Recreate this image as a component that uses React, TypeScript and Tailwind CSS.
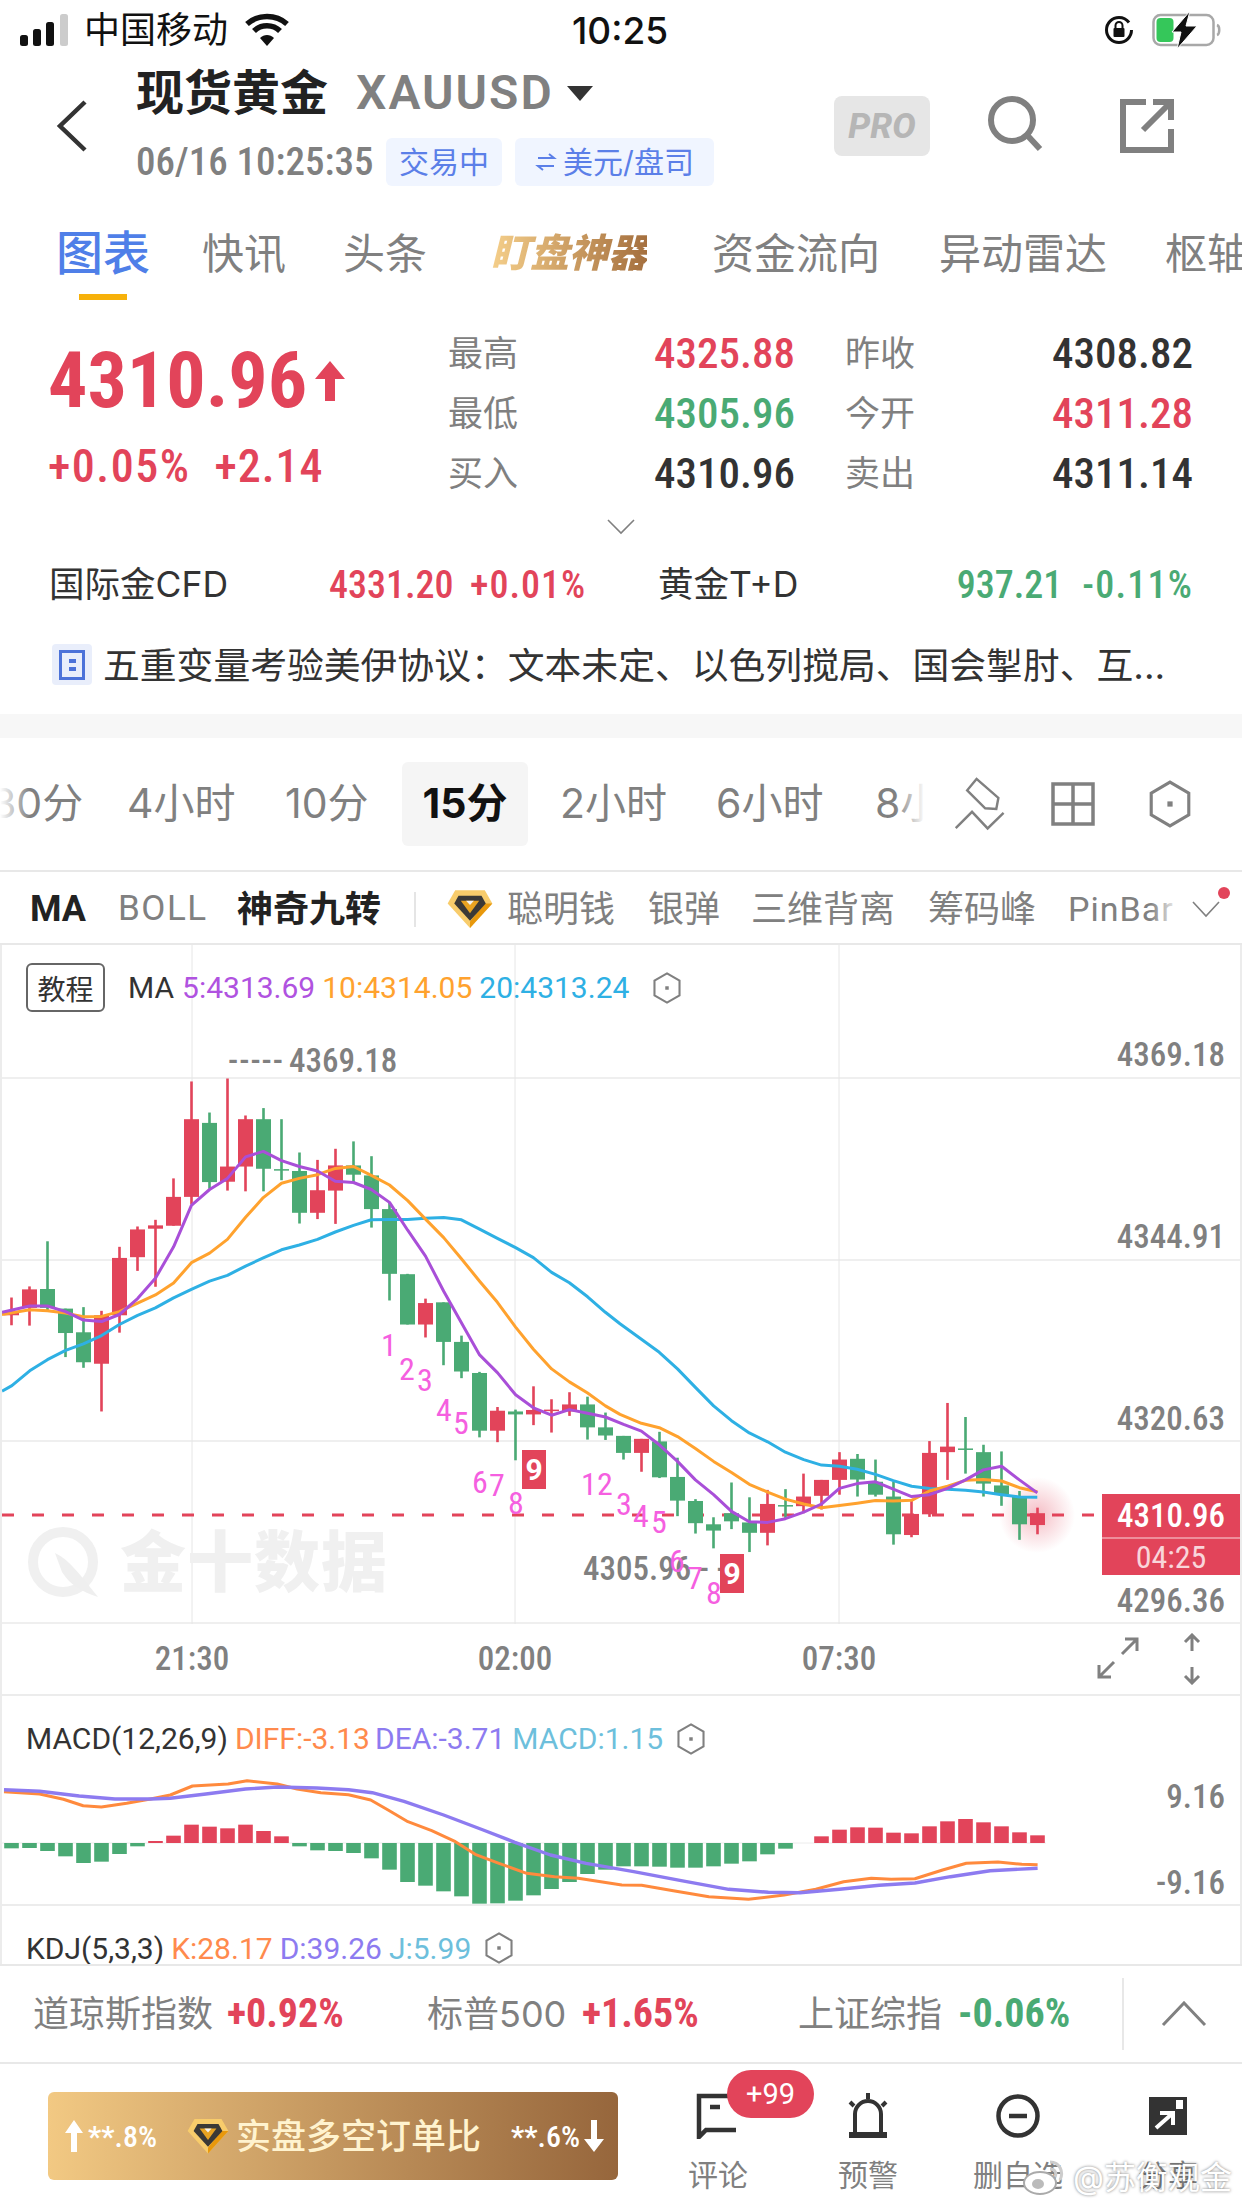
import React from "react";

const RED = "#e2445a";
const GREEN = "#4aaa74";
const num = "font-['Roboto','Noto_Sans_CJK_SC',sans-serif] [font-stretch:75%]";
const axis = "font-['Roboto',sans-serif] [font-stretch:75%] text-[33px] leading-[36px] text-[#808080] font-medium";

// wick top, wick bottom, body top, body bottom, up?  (measured in chart-crop units)
type C = [number, number, number, number, number];
const candles: C[] = [
  [642,717,680,690,1],[612,718,620,670,1],[490,680,619,670,0],[672,803,672,738,0],[668,832,736,817,0],[678,950,690,821,1],
  [505,737,535,690,1],[450,570,458,533,1],[432,613,447,456,1],[320,448,370,448,1],[58,390,160,370,1],[142,348,170,330,0],
  [50,353,288,329,1],[150,355,160,288,1],[130,355,160,294,0],[160,325,295,297,0],[250,442,300,413,0],[270,430,352,413,1],
  [240,443,285,353,1],[220,330,285,310,0],[260,453,312,403,0],[385,650,403,578,0],[578,715,579,715,0],[645,750,657,715,1],
  [655,825,655,762,0],[745,860,762,842,0],[843,1020,846,1002,0],[938,1033,948,1002,1],[945,1082,950,958,0],[882,987,946,958,1],
  [917,1007,945,948,1],[898,962,931,950,1],[910,1026,931,993,0],[953,1027,993,1015,0],[1016,1080,1016,1062,0],[1024,1113,1024,1062,1],
  [1005,1130,1031,1128,0],[1075,1233,1127,1191,0],[1187,1280,1192,1252,0],[1236,1320,1255,1272,0],[1142,1268,1225,1247,0],[1182,1330,1250,1278,0],
  [1162,1312,1200,1278,1],[1160,1240,1203,1206,0],[1118,1225,1180,1206,1],[1135,1215,1135,1178,1],[1060,1175,1080,1135,1],[1065,1180,1078,1134,0],
  [1080,1180,1140,1175,0],[1140,1310,1180,1282,0],[1190,1290,1227,1284,1],[1030,1235,1062,1228,1],[927,1135,1045,1060,1],[965,1118,1050,1054,0],
  [1040,1180,1060,1145,0],[1058,1205,1150,1175,0],[1165,1297,1180,1255,0],[1210,1282,1225,1257,1],
];
const Y = (v: number) => 1060 + v / 2.703;

const mk = (a: number[][], b: number[][]) =>
  a.map(([x, y]) => `${(x / 2.529).toFixed(1)},${Y(y).toFixed(1)}`).concat(b.map(([x, y]) => `${(620 + x / 2.521).toFixed(1)},${Y(y).toFixed(1)}`)).join(" ");

const ma5 = mk(
  [[5,682],[75,665],[120,665],[166,680],[211,703],[257,707],[302,688],[348,645],[393,590],[439,505],[484,393],[530,350],[575,320],[621,262],[666,247],[712,272],[757,288],[803,300],[848,328],[894,331],[939,350],[985,385],[1031,460],[1076,530],[1122,625],[1167,710],[1213,797],[1258,845],[1304,905],[1349,940],[1395,960],[1440,945],[1486,955],[1531,965]],
  [[9,985],[54,1003],[99,1040],[145,1085],[190,1135],[236,1175],[281,1220],[326,1248],[372,1250],[417,1240],[463,1222],[508,1200],[553,1158],[598,1145],[644,1140],[689,1160],[735,1180],[780,1175],[826,1158],[871,1135],[916,1108],[962,1098],[1007,1135],[1052,1170]]
);
const ma10 = mk(
  [[5,688],[75,675],[120,678],[166,684],[211,694],[257,693],[302,680],[348,657],[393,635],[439,603],[484,548],[530,522],[575,485],[621,425],[666,372],[712,333],[757,320],[803,310],[848,293],[894,288],[939,312],[985,338],[1031,380],[1076,430],[1122,480],[1167,537],[1213,598],[1258,655],[1304,722],[1349,782],[1395,835],[1440,870],[1486,900],[1531,935]],
  [[0,958],[54,982],[99,994],[145,1018],[190,1050],[236,1085],[281,1115],[326,1147],[372,1168],[417,1187],[463,1200],[508,1210],[553,1204],[598,1198],[644,1191],[689,1192],[735,1190],[780,1165],[826,1152],[871,1136],[916,1134],[962,1138],[1007,1156],[1052,1167]]
);
const ma20 = mk(
  [[5,895],[30,880],[75,840],[120,810],[166,785],[211,767],[257,745],[302,715],[348,690],[393,670],[439,643],[484,620],[530,598],[575,582],[621,557],[666,535],[712,513],[757,500],[803,485],[848,465],[894,447],[939,432],[985,431],[1031,431],[1076,428],[1122,426],[1167,432],[1213,457],[1258,482],[1304,507],[1349,534],[1395,574],[1440,602],[1486,640],[1531,682]],
  [[0,713],[54,755],[99,790],[145,835],[190,885],[236,935],[281,975],[326,1008],[372,1032],[417,1060],[463,1080],[508,1095],[553,1098],[598,1106],[644,1120],[689,1137],[735,1152],[780,1158],[826,1160],[871,1163],[916,1168],[962,1175],[1007,1181],[1052,1182]]
);

const macdBars = [626,625,634,650,670,666,643,620,604,588,555,561,566,555,574,590,620,632,634,640,656,690,727,738,755,770,792,791,783,767,748,727,703,690,680,680,681,684,684,680,672,665,644,627,610,590,570,563,564,579,581,560,545,538,548,560,578,587];
const line6 = (a: number[][]) => a.map(([x, y]) => `${(x / 1.2625).toFixed(1)},${(1640 + y / 3).toFixed(1)}`).join(" ");
const diff = line6([[5,455],[50,462],[80,478],[105,497],[128,501],[160,490],[190,477],[215,465],[243,438],[288,432],[312,422],[350,432],[375,447],[405,458],[440,464],[468,480],[490,510],[515,545],[545,572],[575,605],[600,643],[630,670],[665,700],[700,710],[730,715],[785,735],[810,736],[850,752],[895,770],[945,778],[990,765],[1030,748],[1065,725],[1100,715],[1125,718],[1155,716],[1190,690],[1220,670],[1260,666],[1290,673],[1310,674]]);
const dea = line6([[5,449],[50,454],[100,468],[145,477],[190,477],[215,475],[260,462],[310,447],[350,441],[400,444],[440,449],[470,458],[510,484],[560,525],[610,570],[650,607],[695,645],[740,670],[800,695],[860,722],[920,748],[970,757],[1010,758],[1060,748],[1110,736],[1155,729],[1200,710],[1250,692],[1310,685]]);

const nines: [string, number, number][] = [
  ["1",389,1345],["2",407,1369],["3",425,1380],["4",444,1410],["5",461,1423],["6",480,1482],["7",497,1485],["8",516,1503],
  ["1",589,1484],["2",605,1484],["3",624,1504],["4",641,1516],["5",659,1522],["6",677,1561],["7",695,1578],["8",714,1593],
];

function Hex({ className = "" }: { className?: string }) {
  return (
    <svg viewBox="0 0 40 46" className={className} fill="none" stroke="#808080" strokeWidth="3">
      <polygon points="20,2 38,12.5 38,33.5 20,44 2,33.5 2,12.5" />
      <rect x="17.5" y="20.5" width="5" height="5" fill="#808080" stroke="none" />
    </svg>
  );
}

function Diamond({ className = "" }: { className?: string }) {
  return (
    <svg viewBox="50 52 140 120" className={className}>
      <polygon points="75,55 165,55 188,95 120,170 52,95" fill="#f8cc6b" />
      <polygon points="188,95 120,170 120,150 165,95" fill="#e8980c" />
      <polygon points="85,72 155,72 168,95 120,148 72,95" fill="#3b3936" />
      <polygon points="92,87 148,87 120,125" fill="#e9a321" />
      <polygon points="108,87 132,87 120,100" fill="#f2f2f2" />
    </svg>
  );
}

function Stat({ label, value, color }: { label: string; value: string; color: string }) {
  return (
    <div className="flex items-center justify-between h-[60px]">
      <span className="text-[35px] text-[#808080]">{label}</span>
      <span className={`${num} text-[43px] font-medium ${color}`}>{value}</span>
    </div>
  );
}

export default function App() {
  return (
    <div className="relative w-[1242px] h-[2208px] overflow-hidden bg-white text-[#333] font-['Inter','Noto_Sans_CJK_SC',sans-serif]">
      {/* status bar */}
      <div className="flex items-center h-[60px] pl-[20px] pr-[20px]">
        <svg width="52" height="34" viewBox="0 0 52 34" className="shrink-0">
          <rect x="0" y="22" width="8" height="11" rx="2.5" fill="#111" />
          <rect x="13" y="16" width="8" height="17" rx="2.5" fill="#111" />
          <rect x="26" y="9" width="8" height="24" rx="2.5" fill="#111" />
          <rect x="40" y="1" width="8" height="32" rx="2.5" fill="#ccc" />
        </svg>
        <span className="ml-[12px] text-[36px] leading-none text-[#111] w-[148px] shrink-0">中国移动</span>
        <svg width="46" height="34" viewBox="0 0 46 34" className="ml-[12px] shrink-0" fill="none" stroke="#111" strokeWidth="5.5">
          <path d="M3 11 C14 1 32 1 43 11" />
          <path d="M10 18 C17 11 29 11 36 18" />
          <path d="M16 25 L23 33 L30 25 C26 21 20 21 16 25Z" fill="#111" stroke="none" />
        </svg>
        <span className="ml-[278px] text-[37px] leading-none text-[#111] font-medium w-[104px] text-center">10:25</span>
        <div className="ml-auto flex items-center">
          <svg width="32" height="32" viewBox="0 0 32 32" fill="none">
            <circle cx="16" cy="16" r="12.5" stroke="#111" strokeWidth="3" strokeDasharray="70 10" />
            <rect x="10.5" y="14" width="11" height="9" rx="1" fill="#111" />
            <path d="M12.5 14 V11.5 A3.5 3.5 0 0 1 19.5 11.5 V14" stroke="#111" strokeWidth="2" />
          </svg>
          <svg width="70" height="38" viewBox="0 0 70 38" className="ml-[17px]" fill="none">
            <rect x="1.5" y="4" width="60" height="30" rx="7" stroke="#a8a8a8" strokeWidth="2.5" />
            <rect x="4.5" y="7" width="17" height="24" rx="4" fill="#35c75a" />
            <path d="M65 14 C68 15 68 23 65 24" stroke="#a8a8a8" strokeWidth="2.5" />
            <path d="M38 0 L20 21 H29 L25 38 L45 15 H34 Z" fill="#111" stroke="#fff" strokeWidth="1" />
          </svg>
        </div>
      </div>

      {/* header */}
      <div className="flex h-[126px]">
        <div className="w-[136px] shrink-0 pl-[55px] pt-[40px]">
          <svg width="34" height="52" viewBox="0 0 34 52" fill="none" stroke="#333" strokeWidth="4.5"><path d="M30 2 L5 26 L30 50" /></svg>
        </div>
        <div className="flex flex-col">
          <div className="flex items-center h-[66px]">
            <span className="text-[48px] leading-none font-bold text-[#222]">现货黄金</span>
            <span className="ml-[28px] text-[48px] leading-none font-semibold text-[#808080] tracking-[2px] font-['Roboto',sans-serif]">XAUUSD</span>
            <span className="ml-[13px] w-0 h-0 border-x-[13px] border-x-transparent border-t-[15px] border-t-[#333]" />
          </div>
          <div className="flex items-center mt-[12px] h-[48px]">
            <span className={`${num} text-[39px] font-medium text-[#808080] w-[250px]`}>06/16 10:25:35</span>
            <span className="h-[48px] w-[116px] flex items-center justify-center rounded-md bg-[#f0f5ff] text-[#5b7fe8] text-[30px]">交易中</span>
            <span className="ml-[13px] h-[48px] w-[199px] flex items-center justify-center rounded-md bg-[#f0f5ff] text-[#5b7fe8] text-[30px]">
              <svg width="22" height="22" viewBox="0 0 22 22" fill="none" stroke="#5b7fe8" strokeWidth="2" className="mr-[6px]">
                <path d="M3 7 H19 L14 3" /><path d="M19 15 H3 L8 19" />
              </svg>
              美元/盘司
            </span>
          </div>
        </div>
        <div className="ml-auto flex items-start pt-[36px] pr-[66px]">
          <div className="w-[96px] h-[60px] flex items-center justify-center rounded-lg bg-[#e6e6e6] text-[#b6b6b6] italic font-extrabold text-[35px] leading-none font-['Roboto',sans-serif]">PRO</div>
          <svg width="56" height="56" viewBox="0 0 56 56" className="ml-[58px]" fill="none" stroke="#808080" strokeWidth="6">
            <circle cx="24" cy="24" r="21" /><path d="M39 39 L52 53" />
          </svg>
          <svg width="56" height="56" viewBox="0 0 56 56" className="ml-[76px] mt-[3px]" fill="none" stroke="#808080" strokeWidth="6">
            <path d="M26 3 H3 V51 H51 V30" /><path d="M23 31 L49 5" /><path d="M33 3 H51 V21" />
          </svg>
        </div>
      </div>

      {/* main tabs */}
      <div className="relative flex items-center h-[114px] pl-[56px] pt-[20px] overflow-hidden whitespace-nowrap text-[#808080] text-[42px]">
        <span className="text-[47px] text-[#4f7fe8] font-medium w-[94px] shrink-0">图表</span>
        <span className="ml-[52px] shrink-0">快讯</span>
        <span className="ml-[57px] shrink-0">头条</span>
        <span className="ml-[64px] shrink-0 italic text-[39px] font-black bg-gradient-to-r from-[#f5cf8a] to-[#a5703f] bg-clip-text text-transparent">盯盘神器</span>
        <span className="ml-[65px] shrink-0">资金流向</span>
        <span className="ml-[59px] shrink-0">异动雷达</span>
        <span className="ml-[58px] shrink-0">枢轴</span>
        <span className="absolute left-[79px] top-[108px] w-[48px] h-[6px] bg-[#f7b10a]" />
      </div>

      {/* quote */}
      <div className="flex h-[212px]">
        <div className="w-[448px] shrink-0 pl-[48px] pt-[51px]">
          <div className="flex items-center h-[60px]">
            <span className={`${num} text-[78px] leading-none font-bold text-[#e2445a]`}>4310.96</span>
            <svg width="30" height="40" viewBox="0 0 30 40" className="ml-[8px]"><path d="M15 0 L30 18 H20 V40 H10 V18 H0 Z" fill="#e2445a" /></svg>
          </div>
          <div className={`${num} flex mt-[35px] h-[40px] items-center text-[46px] tracking-[1.5px] font-medium text-[#e2445a]`}>
            <span>+0.05%</span><span className="ml-[24px] tracking-[1px]">+2.14</span>
          </div>
        </div>
        <div className="flex pt-[23px] pr-[49px] flex-1">
          <div className="w-[347px] flex flex-col">
            <Stat label="最高" value="4325.88" color="text-[#e2445a]" />
            <Stat label="最低" value="4305.96" color="text-[#4aaa74]" />
            <Stat label="买入" value="4310.96" color="text-[#333]" />
          </div>
          <div className="ml-[50px] flex-1 flex flex-col">
            <Stat label="昨收" value="4308.82" color="text-[#333]" />
            <Stat label="今开" value="4311.28" color="text-[#e2445a]" />
            <Stat label="卖出" value="4311.14" color="text-[#333]" />
          </div>
        </div>
      </div>
      <div className="flex justify-center items-center h-[30px]">
        <svg width="28" height="16" viewBox="0 0 28 16" fill="none" stroke="#808080" strokeWidth="1.6"><path d="M1 1 L14 14 L27 1" /></svg>
      </div>

      {/* cfd row */}
      <div className="flex items-center h-[86px] pl-[49px] pr-[49px] whitespace-nowrap">
        <span className="text-[35.5px] w-[280px]">国际金CFD</span>
        <span className={`${num} text-[38px] font-medium text-[#e2445a] w-[141px]`}>4331.20</span>
        <span className={`${num} text-[38px] tracking-[1px] font-medium text-[#e2445a] w-[188px]`}>+0.01%</span>
        <span className="text-[35.5px]">黄金T+D</span>
        <span className={`${num} ml-auto text-[38px] font-medium text-[#4aaa74]`}>937.21</span>
        <span className={`${num} ml-[20px] text-[38px] tracking-[1.2px] font-medium text-[#4aaa74]`}>-0.11%</span>
      </div>

      {/* news */}
      <div className="flex items-start h-[86px] pl-[52px] pt-[16px] whitespace-nowrap">
        <div className="w-[40px] h-[41px] rounded bg-[#e9eefb] flex items-center justify-center shrink-0">
          <div className="w-[26px] h-[30px] border-[3px] border-[#4c72d9] flex flex-col items-center justify-center gap-[4px]">
            <span className="w-[7px] h-[4px] bg-[#4c72d9]" /><span className="w-[7px] h-[4px] bg-[#4c72d9]" />
          </div>
        </div>
        <span className="ml-[11px] text-[36.8px] leading-[44px] text-[#333]">五重变量考验美伊协议：文本未定、以色列搅局、国会掣肘、互...</span>
      </div>

      <div className="h-[24px] bg-[#f7f7f7]" />

      {/* period tabs */}
      <div className="flex items-center h-[134px] border-b-2 border-[#e8e8e8]">
        <div className="relative w-[925px] h-full overflow-hidden shrink-0">
          <div className="flex items-center h-full ml-[-9px] text-[41px] text-[#808080] whitespace-nowrap">
            <span className="w-[85px] shrink-0">30分</span>
            <span className="ml-[51px] w-[108px] shrink-0">4小时</span>
            <span className="ml-[50px] w-[85px] shrink-0">10分</span>
            <span className="ml-[32px] w-[126px] h-[84px] shrink-0 rounded-md bg-[#f5f5f5] flex items-center justify-center font-bold text-[#111]">15分</span>
            <span className="ml-[32px] w-[105px] shrink-0">2小时</span>
            <span className="ml-[51px] w-[109px] shrink-0">6小时</span>
            <span className="ml-[50px] w-[108px] shrink-0">8小时</span>
          </div>
          <div className="absolute left-0 top-0 bottom-0 w-[30px] bg-gradient-to-r from-white to-transparent" />
          <div className="absolute right-0 top-0 bottom-0 w-[30px] bg-gradient-to-l from-white to-transparent" />
        </div>
        <svg width="52" height="54" viewBox="40 50 150 155" className="ml-[29px] shrink-0" fill="none" stroke="#808080" strokeWidth="7">
          <polygon points="105,55 168,110 162,142 130,140 78,88" /><path d="M45 197 L92 150 L137 198 L183 153" />
        </svg>
        <svg width="44" height="44" viewBox="0 0 44 44" className="ml-[45px] shrink-0" fill="none" stroke="#808080" strokeWidth="3.5">
          <rect x="2" y="2" width="40" height="40" /><path d="M22 2 V42 M2 22 H42" />
        </svg>
        <Hex className="ml-[54px] w-[42px] h-[48px] shrink-0" />
      </div>

      {/* indicators */}
      <div className="relative flex items-center h-[73px] pt-[3px] border-b-2 border-[#e8e8e8] whitespace-nowrap text-[36px] text-[#808080] overflow-hidden">
        <span className="ml-[30px] w-[58px] text-[36px] font-bold text-[#222] font-['Roboto',sans-serif]">MA</span>
        <span className="ml-[30px] w-[89px] text-[#808080] font-['Roboto',sans-serif] text-[35px] tracking-[1.5px]">BOLL</span>
        <span className="ml-[30px] w-[145px] text-[36px] font-bold text-[#222]">神奇九转</span>
        <span className="ml-[32px] w-[2px] h-[35px] bg-[#e5e5e5]" />
        <Diamond className="ml-[31px] w-[46px] h-[40px] shrink-0" />
        <span className="ml-[14px] w-[110px]">聪明钱</span>
        <span className="ml-[31px] w-[72px]">银弹</span>
        <span className="ml-[31px] w-[145px]">三维背离</span>
        <span className="ml-[32px] w-[110px]">筹码峰</span>
        <span className="ml-[30px] w-[108px] font-['Roboto',sans-serif] text-[34px] tracking-[1px]">PinBar</span>
        <div className="absolute left-[1150px] top-0 bottom-0 w-[30px] bg-gradient-to-l from-white to-transparent" />
        <svg width="28" height="18" viewBox="0 0 28 18" className="ml-[16px] shrink-0" fill="none" stroke="#808080" strokeWidth="1.6"><path d="M1 2 L14 16 L27 2" /></svg>
        <span className="absolute left-[1218px] top-[15px] w-[12px] h-[12px] rounded-full bg-[#e2445a]" />
      </div>

      {/* chart panel */}
      <div className="border-x-2 border-[#ececec]">
        <div className="relative h-[679px] border-b-2 border-[#efefef]">
          <svg width="1238" height="679" viewBox="2 945 1238 679" className="absolute left-0 top-0">
            {[1078, 1260, 1441].map((y) => <line key={y} x1="2" x2="1240" y1={y} y2={y} stroke="#efefef" strokeWidth="2" />)}
            {[192, 515, 839].map((x) => <line key={x} x1={x} x2={x} y1="945" y2="1624" stroke="#e6e6e6" strokeWidth="1" />)}
            <g fill="#efefef">
              <circle cx="63" cy="1562" r="30" fill="none" stroke="#f0f0f0" strokeWidth="10" />
              <path d="M55 1553 C70 1560 80 1575 98 1597 C82 1592 70 1585 62 1572 Z" />
            </g>
            <line x1="2" x2="1102" y1="1515" y2="1515" stroke={RED} strokeWidth="2.8" strokeDasharray="12 18" />
            <defs>
              <radialGradient id="glow"><stop offset="0" stopColor="#e2445a" stopOpacity=".35" /><stop offset="1" stopColor="#e2445a" stopOpacity="0" /></radialGradient>
            </defs>
            <circle cx="1037" cy="1515" r="38" fill="url(#glow)" />
            {candles.map((c, i) => {
              const x = 11.5 + 18 * i;
              const col = c[4] ? RED : GREEN;
              const top = Y(c[2]);
              return (
                <g key={i} fill={col}>
                  <rect x={x - 1.3} y={Y(c[0])} width="2.6" height={Y(c[1]) - Y(c[0])} />
                  <rect x={x - 7.5} y={top} width="15" height={Math.max(Y(c[3]) - top, 1.5)} />
                </g>
              );
            })}
            <polyline points={ma20} fill="none" stroke="#2eb0e4" strokeWidth="3" strokeLinejoin="round" />
            <polyline points={ma10} fill="none" stroke="#ffa22e" strokeWidth="3" strokeLinejoin="round" />
            <polyline points={ma5} fill="none" stroke="#a94fd8" strokeWidth="3" strokeLinejoin="round" />
          </svg>

          <div className="relative flex items-center pl-[24px] pt-[18px] text-[30px] font-['Roboto',sans-serif] whitespace-nowrap">
            <span className="w-[79px] h-[49px] rounded-md border-2 border-[#666] flex items-center justify-center text-[28px] font-['Noto_Sans_CJK_SC',sans-serif] bg-white">教程</span>
            <span className="ml-[23px] text-[#333]">MA</span>
            <span className="ml-[8px] text-[#b052e0]">5:4313.69</span>
            <span className="ml-[7px] text-[#ffa22e]">10:4314.05</span>
            <span className="ml-[7px] text-[#2eb0e4]">20:4313.24</span>
            <Hex className="ml-[24px] w-[28px] h-[32px]" />
          </div>

          <div className={`absolute left-[226px] top-[98px] flex whitespace-pre ${axis}`}>
            <span className="tracking-[1px]">-----</span>
            <span className="ml-[5px]">4369.18</span>
          </div>
          <span className={`absolute right-[15px] top-[92px] ${axis}`}>4369.18</span>
          <span className={`absolute right-[15px] top-[274px] ${axis}`}>4344.91</span>
          <span className={`absolute right-[15px] top-[456px] ${axis}`}>4320.63</span>
          <span className={`absolute right-[15px] top-[638px] ${axis}`}>4296.36</span>
          <span className={`absolute left-[581px] top-[606px] whitespace-pre ${axis}`}>{"4305.96 - - -"}</span>

          <span className="absolute left-[118px] top-[584px] text-[66px] leading-[66px] font-black text-[#f0f0f0] tracking-[1px]">金十数据</span>

          {nines.map(([t, x, y], i) => (
            <span key={i} className={`absolute -translate-x-1/2 -translate-y-1/2 text-[32px] leading-none text-[#f55fe0] ${num}`} style={{ left: x - 2, top: y - 945 }}>{t}</span>
          ))}
          <span className="absolute left-[520px] top-[505px] w-[24px] h-[39px] bg-[#e2445a] text-white font-bold text-[30px] leading-[39px] text-center font-['Roboto',sans-serif]">9</span>
          <span className="absolute left-[718px] top-[609px] w-[24px] h-[39px] bg-[#e2445a] text-white font-bold text-[30px] leading-[39px] text-center font-['Roboto',sans-serif]">9</span>

          <div className="absolute right-0 top-[549px] w-[138px] flex flex-col bg-[#e2445a] text-white">
            <span className={`${num} h-[43px] flex items-center justify-center text-[33px] font-medium`}>4310.96</span>
            <span className="h-[2px] bg-[#ee8d9a]" />
            <span className={`${num} h-[36px] flex items-center justify-center text-[32px] text-[#f9d5da]`}>04:25</span>
          </div>
        </div>

        {/* time axis */}
        <div className={`relative h-[72px] border-b-2 border-[#ececec] ${axis}`}>
          <span className="absolute left-[190px] top-[17px] -translate-x-1/2">21:30</span>
          <span className="absolute left-[513px] top-[17px] -translate-x-1/2">02:00</span>
          <span className="absolute left-[837px] top-[17px] -translate-x-1/2">07:30</span>
          <svg width="42" height="42" viewBox="0 0 42 42" className="absolute left-[1095px] top-[13px]" fill="none" stroke="#808080" strokeWidth="3">
            <path d="M25 17 L40 2 M28 2 H40 V14" /><path d="M17 25 L2 40 M2 28 V40 H14" />
          </svg>
          <svg width="20" height="52" viewBox="0 0 20 52" className="absolute left-[1180px] top-[9px]" fill="none" stroke="#808080" strokeWidth="3">
            <path d="M10 2 V18 M3 9 L10 2 L17 9" /><path d="M10 34 V50 M3 43 L10 50 L17 43" />
          </svg>
        </div>

        {/* MACD */}
        <div className="relative h-[210px] border-b-2 border-[#ececec]">
          <svg width="1238" height="208" viewBox="2 1696 1238 208" className="absolute left-0 top-0">
            <line x1="2" x2="1046" y1="1843" y2="1843" stroke="#ececec" strokeWidth="1" />
            {macdBars.map((v, i) => {
              if (v === 610) return null;
              const x = 11.5 + 18 * i;
              const h = Math.abs(v - 610) / 3;
              return <rect key={i} x={x - 7.3} y={v < 610 ? 1843 - h : 1843} width="14.6" height={h} fill={v < 610 ? RED : GREEN} />;
            })}
            <polyline points={diff} fill="none" stroke="#ff8a3d" strokeWidth="3" strokeLinejoin="round" />
            <polyline points={dea} fill="none" stroke="#8d7bf0" strokeWidth="3.4" strokeLinejoin="round" />
          </svg>
          <div className="relative flex items-center pl-[24px] pt-[20px] text-[30px] font-['Roboto',sans-serif] whitespace-nowrap">
            <span className="text-[#333]">MACD(12,26,9)</span>
            <span className="ml-[7px] text-[#ff8a4d]">DIFF:-3.13</span>
            <span className="ml-[5px] text-[#8d7bf0]">DEA:-3.71</span>
            <span className="ml-[7px] text-[#6dbfdc]">MACD:1.15</span>
            <Hex className="ml-[14px] w-[28px] h-[32px]" />
          </div>
          <span className={`absolute right-[15px] top-[83px] ${axis}`}>9.16</span>
          <span className={`absolute right-[15px] top-[169px] ${axis}`}>-9.16</span>
        </div>

        {/* KDJ */}
        <div className="flex items-center h-[58px] pl-[24px] pt-[26px] overflow-hidden text-[30px] font-['Roboto',sans-serif] whitespace-nowrap">
          <span className="text-[#333]">KDJ(5,3,3)</span>
          <span className="ml-[7px] text-[#ff8a4d]">K:28.17</span>
          <span className="ml-[7px] text-[#8d7bf0]">D:39.26</span>
          <span className="ml-[7px] text-[#6dbfdc]">J:5.99</span>
          <Hex className="ml-[14px] w-[28px] h-[32px]" />
        </div>
      </div>

      {/* index row */}
      <div className="flex items-center h-[100px] border-y-2 border-[#e8e8e8] whitespace-nowrap">
        <span className="ml-[33px] w-[182px] shrink-0 text-[36px] text-[#808080]">道琼斯指数</span>
        <span className={`${num} ml-[12px] w-[115px] shrink-0 text-[40px] font-bold text-[#e2445a]`}>+0.92%</span>
        <span className="ml-[85px] w-[140px] shrink-0 text-[36px] text-[#808080]">标普500</span>
        <span className={`${num} ml-[15px] w-[114px] shrink-0 text-[40px] font-bold text-[#e2445a]`}>+1.65%</span>
        <span className="ml-[102px] w-[145px] shrink-0 text-[36px] text-[#808080]">上证综指</span>
        <span className={`${num} ml-[15px] w-[113px] shrink-0 text-[40px] font-bold text-[#4aaa74]`}>-0.06%</span>
        <span className="ml-[51px] w-[2px] h-[72px] bg-[#e8e8e8] shrink-0" />
        <svg width="46" height="26" viewBox="0 0 46 26" className="ml-[37px] shrink-0" fill="none" stroke="#808080" strokeWidth="3"><path d="M2 24 L23 2 L44 24" /></svg>
      </div>

      {/* bottom bar */}
      <div className="relative flex h-[144px]">
        <div className="ml-[48px] mt-[28px] w-[570px] h-[88px] rounded-md bg-gradient-to-r from-[#f2c983] to-[#96663c] flex items-center text-[#fff3cf] whitespace-nowrap shrink-0">
          <svg width="18" height="32" viewBox="0 0 18 32" className="ml-[17px] shrink-0"><path d="M9 0 L18 13 H12 V32 H6 V13 H0 Z" fill="#fff" /></svg>
          <span className={`${num} ml-[5px] w-[70px] text-[30px] font-medium text-white`}>**.8%</span>
          <Diamond className="ml-[29px] w-[42px] h-[40px] shrink-0" />
          <span className="ml-[7px] w-[246px] text-[35px] font-medium">实盘多空订单比</span>
          <span className={`${num} ml-[29px] w-[68px] text-[30px] font-medium text-white`}>**.6%</span>
          <svg width="20" height="32" viewBox="0 0 20 32" className="ml-[5px] shrink-0"><path d="M10 32 L20 19 H13 V0 H7 V19 H0 Z" fill="#fff" /></svg>
        </div>
        <div className="flex ml-[25px]">
          {[
            { l: "评论", i: <svg width="44" height="46" viewBox="0 0 44 46" fill="none" stroke="#333" strokeWidth="4.5"><path d="M40 3 H3 V44 L10 37 H40" /><path d="M14 14 H24" /></svg> },
            { l: "预警", i: <svg width="44" height="46" viewBox="0 0 44 46" fill="none" stroke="#333" strokeWidth="4"><path d="M9 40 V21 A13 13 0 0 1 35 21 V40" /><path d="M3 42 H41" strokeWidth="6" /><path d="M22 0 V6 M4 9 L8 13 M40 9 L36 13" /></svg> },
            { l: "删自选", i: <svg width="44" height="46" viewBox="0 0 44 46" fill="none" stroke="#333" strokeWidth="4.5"><circle cx="22" cy="23" r="19.5" /><path d="M13 23 H31" /></svg> },
            { l: "分享", i: <svg width="44" height="46" viewBox="0 0 44 46"><path fillRule="evenodd" d="M3 4 H41 V42 H3 Z M30 7 V16 H37 V7 Z" fill="#333" /><path d="M10 35 L27 20 M14 20 H27 V32" fill="none" stroke="#fff" strokeWidth="4" /></svg> },
          ].map((t) => (
            <div key={t.l} className="w-[150px] flex flex-col items-center pt-[29px]">
              {t.i}
              <span className="mt-[16px] text-[30px] leading-[40px] text-[#808080]">{t.l}</span>
            </div>
          ))}
        </div>
        <span className="absolute left-[727px] top-[6px] w-[87px] h-[48px] rounded-full bg-[#e2445a] text-white text-[29px] leading-[48px] text-center font-['Roboto',sans-serif]">+99</span>
        {/* photo watermark */}
        <div className="absolute left-[1022px] top-[94px] flex items-center text-[32px] leading-none text-white [text-shadow:0_0_3px_rgba(0,0,0,0.55)]">
          <svg width="44" height="40" viewBox="0 0 44 40" fill="none">
            <ellipse cx="18" cy="25" rx="16" ry="11" fill="#fff" stroke="#aaa" strokeWidth="2" />
            <ellipse cx="16" cy="26" rx="6" ry="5" fill="#bbb" />
            <path d="M28 4 C38 4 42 14 38 22 M28 11 C33 11 35 15 33 19" stroke="#ccc" strokeWidth="3" />
          </svg>
          <span className="ml-[7px] whitespace-nowrap">@苏衡观金</span>
        </div>
      </div>
    </div>
  );
}
